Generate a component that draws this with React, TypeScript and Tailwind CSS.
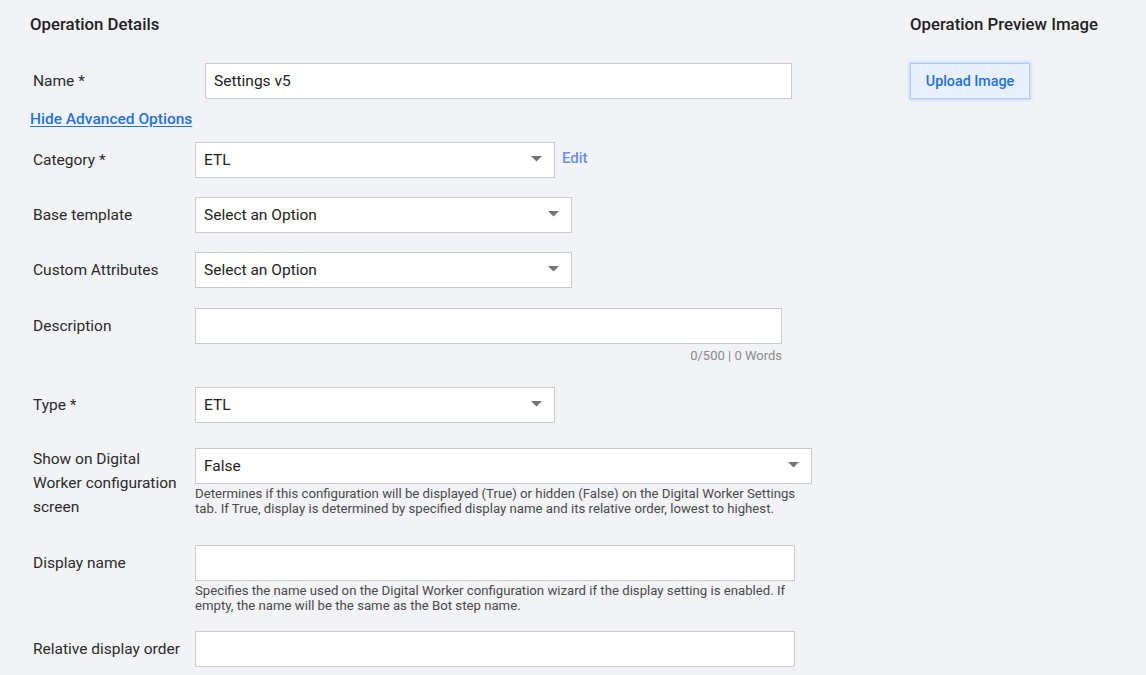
import React from "react";

const font = { fontFamily: "Roboto, 'Noto Sans', Arial, sans-serif" };

function Arrow() {
  return (
    <svg width="11" height="6" viewBox="0 0 11 6" className="absolute right-[12px] top-[13px]">
      <path d="M0 0 L11 0 L5.5 5.5 Z" fill="#757575" />
    </svg>
  );
}

function Select({ value, width }: { value: string; width: string }) {
  return (
    <div className={`relative h-[36px] ${width} border border-[#cccccc] bg-white pl-[8px] pt-[2px] flex items-center text-[15.5px] text-[#222]`}>
      <span>{value}</span>
      <Arrow />
    </div>
  );
}

function Input({ value, width }: { value?: string; width: string }) {
  return (
    <div className={`h-[36px] ${width} border border-[#cccccc] bg-white pl-[8px] pt-[2px] flex items-center text-[15.5px] text-[#222]`}>
      {value}
    </div>
  );
}

function Label({ children, w = "w-[165px]" }: { children: React.ReactNode; w?: string }) {
  return (
    <div className={`${w} shrink-0 pl-[3px] pt-[6px] text-[15.5px] leading-[24px] text-[#2b2b2b]`}>{children}</div>
  );
}

export default function App() {
  return (
    <div style={font} className="min-h-[675px] w-[1146px] bg-[#f2f3f7] flex">
      <div className="w-[880px] pl-[30px] pt-[12px]">
        <div className="text-[16.8px] leading-[24px] font-medium text-[#222]">Operation Details</div>

        <div className="flex items-start mt-[27px]">
          <Label w="w-[175px]">Name *</Label>
          <Input value="Settings v5" width="w-[587px]" />
        </div>

        <div className="mt-[10px] text-[15.5px] leading-[20px] font-medium text-[#1f74e6] underline underline-offset-2">
          Hide Advanced Options
        </div>

        <div className="flex items-start mt-[13px]">
          <Label>Category *</Label>
          <Select value="ETL" width="w-[360px]" />
          <span className="ml-[7px] pt-[5px] text-[15px] leading-[22px] font-medium text-[#6a8ff0]">Edit</span>
        </div>

        <div className="flex items-start mt-[19px]">
          <Label>Base template</Label>
          <Select value="Select an Option" width="w-[377px]" />
        </div>

        <div className="flex items-start mt-[19px]">
          <Label>Custom Attributes</Label>
          <Select value="Select an Option" width="w-[377px]" />
        </div>

        <div className="flex items-start mt-[20px]">
          <Label>Description</Label>
          <div className="w-[587px]">
            <Input width="w-[587px]" />
            <div className="text-right text-[13px] leading-[16px] mt-[4px] text-[#8a8a8a]">0/500 | 0 Words</div>
          </div>
        </div>

        <div className="flex items-start mt-[23px]">
          <Label>Type *</Label>
          <Select value="ETL" width="w-[360px]" />
        </div>

        <div className="flex items-start mt-[25px]">
          <div className="w-[165px] shrink-0 pl-[3px] -mt-[1px] text-[15.5px] leading-[24px] text-[#2b2b2b]">
            Show on Digital
            <br />
            Worker configuration
            <br />
            screen
          </div>
          <div className="w-[617px]">
            <Select value="False" width="w-[617px]" />
            <div className="mt-[2px] text-[13.2px] leading-[15px] text-[#4a4a4a]">
              Determines if this configuration will be displayed (True) or hidden (False) on the Digital Worker Settings tab. If True, display is determined by specified display name and its relative order, lowest to highest.
            </div>
          </div>
        </div>

        <div className="flex items-start mt-[26px]">
          <Label>Display name</Label>
          <div className="w-[600px]">
            <Input width="w-[600px]" />
            <div className="mt-[2px] text-[13.2px] leading-[15px] text-[#4a4a4a]">
              Specifies the name used on the Digital Worker configuration wizard if the display setting is enabled. If empty, the name will be the same as the Bot step name.
            </div>
          </div>
        </div>

        <div className="flex items-start mt-[18px]">
          <Label>Relative display order</Label>
          <Input width="w-[600px]" />
        </div>
      </div>

      <div className="pl-[30px] pt-[12px]">
        <div className="text-[16.8px] leading-[24px] font-medium text-[#222]">Operation Preview Image</div>
        <button className="mt-[27px] h-[36px] w-[120px] pt-[2px] bg-[#e8f0fe] border border-[#aecbfa] shadow-[0_0_3px_1px_rgba(140,180,250,0.5)] text-[14.3px] font-medium text-[#1a73e8]">
          Upload Image
        </button>
      </div>
    </div>
  );
}
